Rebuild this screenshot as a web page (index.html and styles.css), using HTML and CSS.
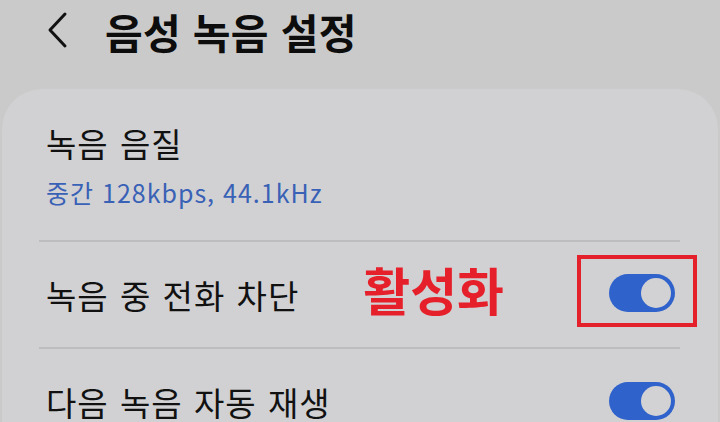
FILE: index.html
```html
<!DOCTYPE html>
<html lang="ko">
<head>
<meta charset="utf-8">
<link rel="stylesheet" href="styles.css">
</head>
<body>
<div class="screen">
  <header class="topbar">
    <svg class="back" width="24" height="40" viewBox="0 0 24 40"><path d="M20 4 L5 20 L20 36" fill="none" stroke="#111" stroke-width="3" stroke-linecap="round" stroke-linejoin="round"/></svg>
    <h1 class="title">음성 녹음 설정</h1>
  </header>
  <section class="card">
    <div class="row row-quality">
      <div class="label">녹음 음질</div>
      <div class="sub">중간 128kbps, 44.1kHz</div>
    </div>
    <div class="divider"></div>
    <div class="row row-toggle">
      <div class="label">녹음 중 전화 차단</div>
      <div class="spacer"></div>
      <div class="annot">활성화</div>
      <div class="toggle marked"><span class="thumb"></span></div>
    </div>
    <div class="divider"></div>
    <div class="row row-toggle row-last">
      <div class="label">다음 녹음 자동 재생</div>
      <div class="spacer"></div>
      <div class="toggle"><span class="thumb"></span></div>
    </div>
  </section>
</div>
</body>
</html>
```
FILE: styles.css
```css
html, body {
  margin: 0;
  padding: 0;
}
body {
  background: #cacaca;
  font-family: "Noto Sans CJK KR", "Noto Sans", sans-serif;
  width: 720px;
  height: 422px;
  overflow: hidden;
}
.screen {
  width: 720px;
  height: 422px;
  overflow: hidden;
}
.topbar {
  height: 89px;
  display: flex;
  align-items: flex-start;
  box-sizing: border-box;
  padding-top: 10px;
  padding-left: 45px;
}
.title {
  margin: -3px 0 0 36px;
  font-size: 41px;
  font-weight: 700;
  line-height: 48px;
  color: #0d0d0d;
  letter-spacing: 0.3px;
}
.card {
  margin: 0 2px;
  background: #d1d1d3;
  border-radius: 40px 40px 0 0;
  padding: 0 38px 0 37px;
  height: 340px;
}
.row {
  box-sizing: border-box;
}
.row-quality {
  height: 151px;
  padding-top: 34px;
  padding-left: 7px;
}
.label {
  font-size: 33px;
  line-height: 40px;
  color: #111;
  letter-spacing: 1px;
  word-spacing: 1px;
}
.sub {
  margin-top: 14px;
  font-size: 25px;
  line-height: 30px;
  color: #3961b6;
  letter-spacing: 1px;
}
.divider {
  height: 2px;
  background: #bdbdbf;
}
.row-toggle {
  height: 105px;
  display: flex;
  align-items: center;
  padding-left: 7px;
}
.row-last {
  height: 106px;
  padding-top: 0;
}
.spacer {
  flex: 1;
}
.annot {
  font-size: 51px;
  font-weight: 700;
  color: #e6202a;
  line-height: 56px;
  margin-top: -12px;
}
.toggle {
  position: relative;
  width: 66px;
  height: 38px;
  border-radius: 19px;
  background: #2f62cb;
  margin-left: 105px;
  margin-right: 5px;
  margin-top: -4px;
  flex: none;
}
.row-last .toggle {
  margin-left: 0;
  margin-top: -2px;
}
.thumb {
  position: absolute;
  right: 4px;
  top: 4px;
  width: 30px;
  height: 30px;
  border-radius: 50%;
  background: #d2d2d4;
}
.marked::after {
  content: "";
  position: absolute;
  left: -32px;
  top: -19px;
  width: 120px;
  height: 72px;
  box-sizing: border-box;
  border: 4px solid #e4202a;
}
```
